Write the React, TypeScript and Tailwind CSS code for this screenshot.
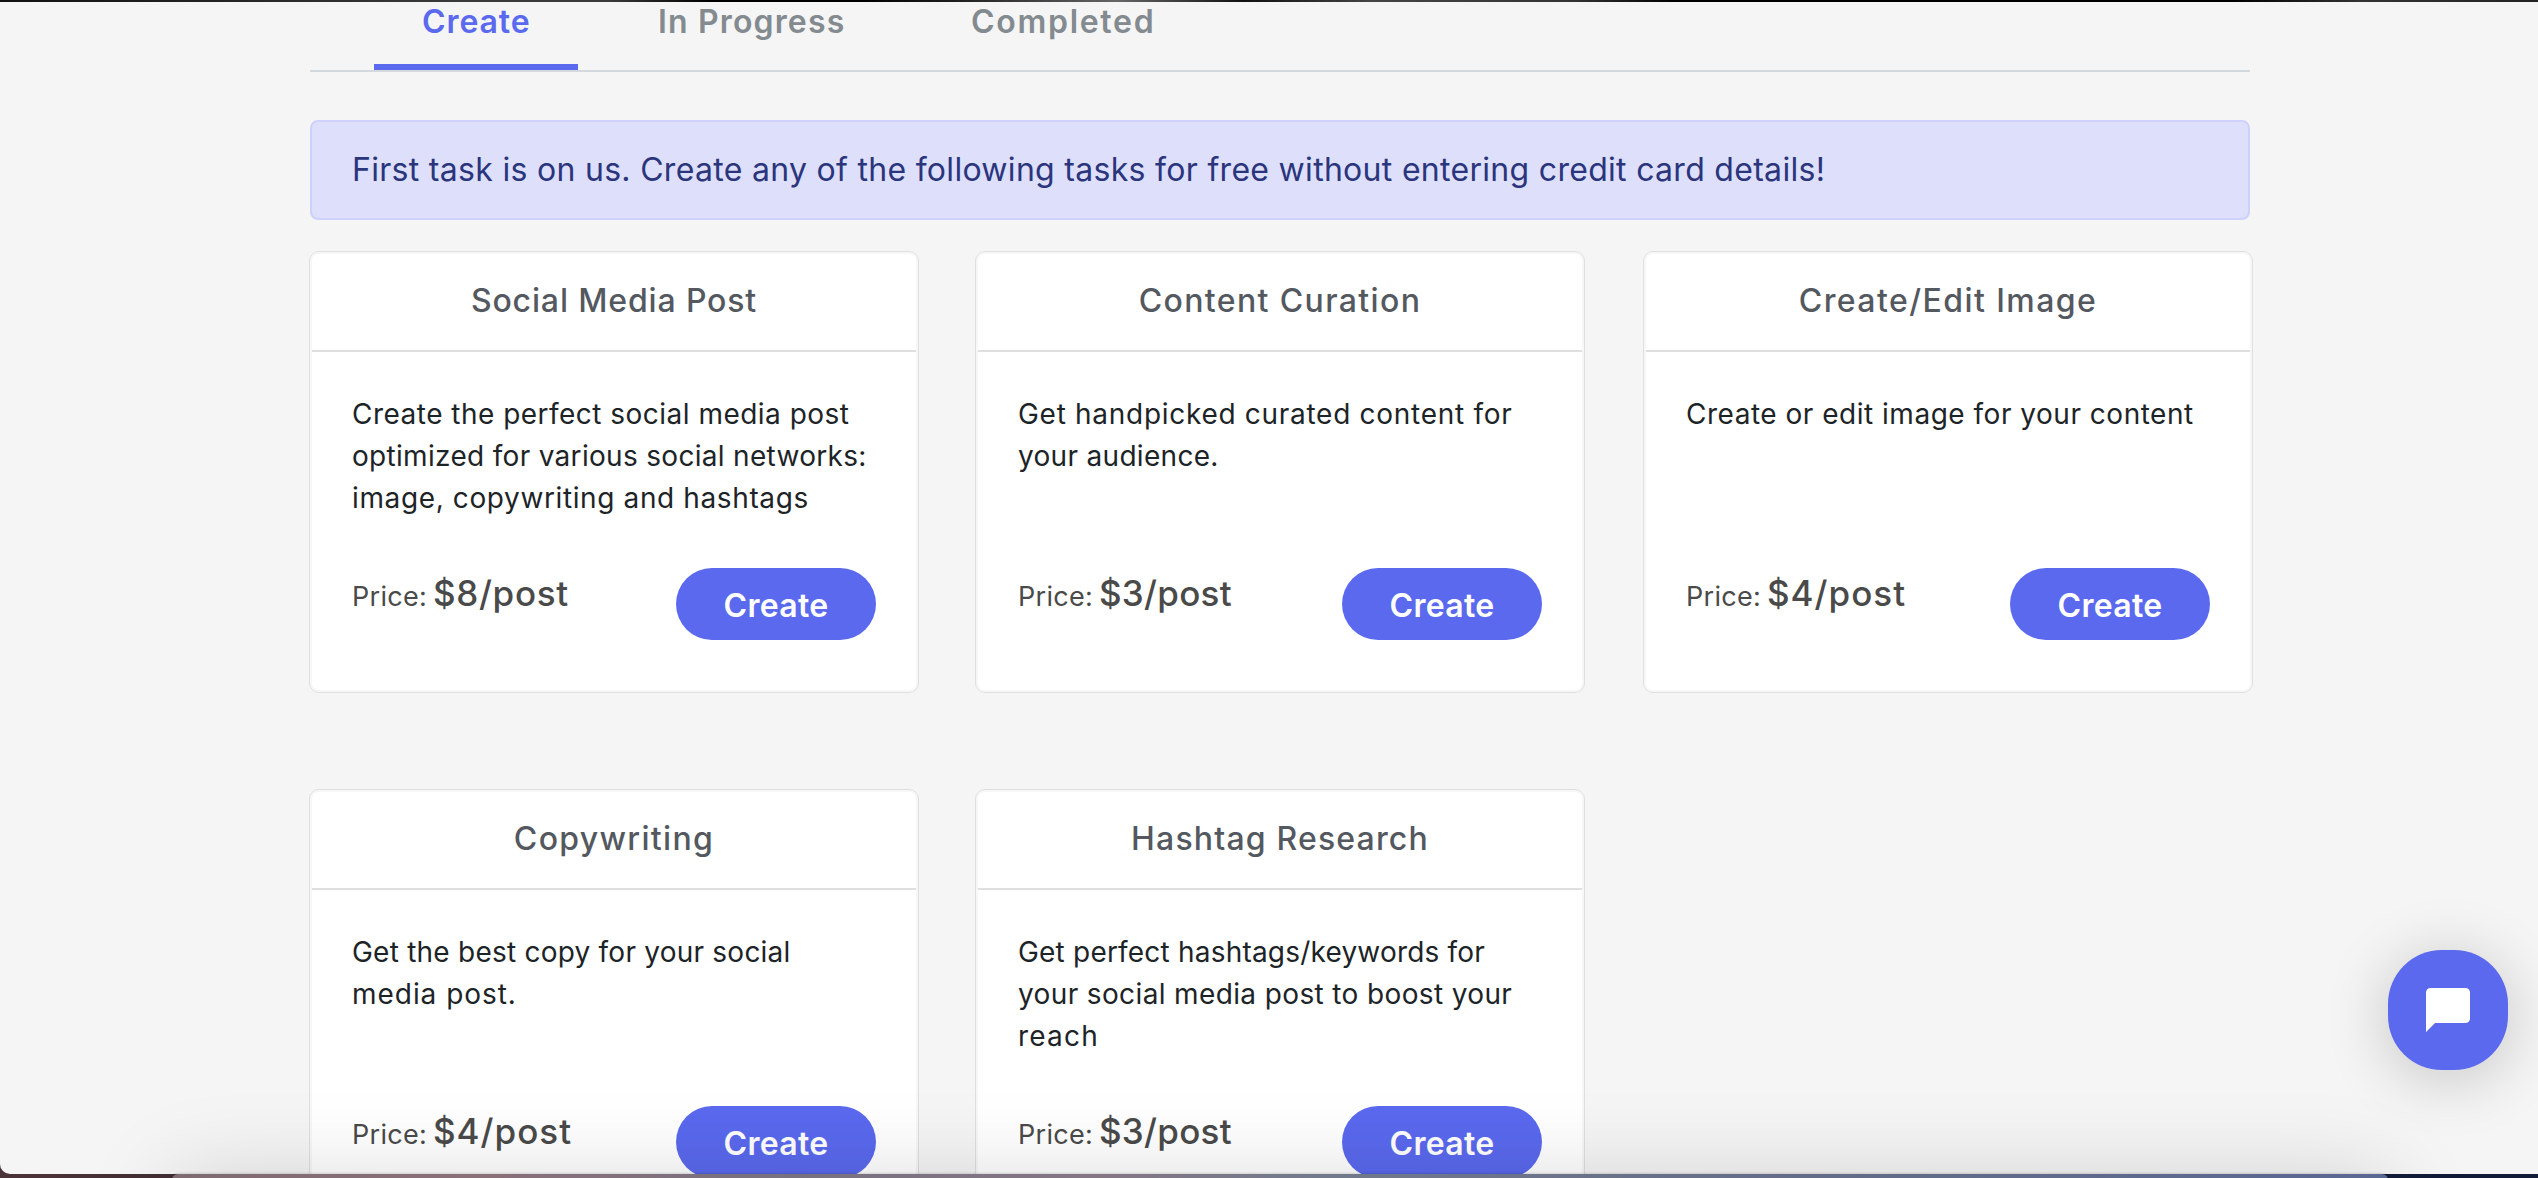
type Line = { text: string; tracking: string };
type Task = {
  title: Line;
  lines: Line[];
  price: Line;
};

const tasks: Task[] = [
  {
    title: { text: "Social Media Post", tracking: "tracking-[0.86px]" },
    lines: [
      { text: "Create the perfect social media post", tracking: "tracking-[0.48px]" },
      { text: "optimized for various social networks:", tracking: "tracking-[0.31px]" },
      { text: "image, copywriting and hashtags", tracking: "tracking-[0.62px]" },
    ],
    price: { text: "$8/post", tracking: "tracking-[0.67px]" },
  },
  {
    title: { text: "Content Curation", tracking: "tracking-[1.37px]" },
    lines: [
      { text: "Get handpicked curated content for", tracking: "tracking-[0.71px]" },
      { text: "your audience.", tracking: "tracking-[0.31px]" },
    ],
    price: { text: "$3/post", tracking: "tracking-[0.26px]" },
  },
  {
    title: { text: "Create/Edit Image", tracking: "tracking-[1.43px]" },
    lines: [{ text: "Create or edit image for your content", tracking: "tracking-[0.51px]" }],
    price: { text: "$4/post", tracking: "tracking-[1.01px]" },
  },
  {
    title: { text: "Copywriting", tracking: "tracking-[1.32px]" },
    lines: [
      { text: "Get the best copy for your social", tracking: "tracking-[0.23px]" },
      { text: "media post.", tracking: "tracking-[0.96px]" },
    ],
    price: { text: "$4/post", tracking: "tracking-[1.01px]" },
  },
  {
    title: { text: "Hashtag Research", tracking: "tracking-[1.17px]" },
    lines: [
      { text: "Get perfect hashtags/keywords for", tracking: "tracking-[0.2px]" },
      { text: "your social media post to boost your", tracking: "tracking-[0.37px]" },
      { text: "reach", tracking: "tracking-[1.22px]" },
    ],
    price: { text: "$3/post", tracking: "tracking-[0.26px]" },
  },
];

function Tabs() {
  return (
    <nav className="flex h-[70px] shrink-0 items-stretch border-b-2 border-[#d2d8db] pl-16 text-[32px] leading-[38px] font-semibold whitespace-nowrap text-[#838b90]">
      <a className="w-[204px] border-b-[6px] border-[#5a69ee] pt-px pl-12 tracking-[0.9px] text-[#5a69ee]">
        Create
      </a>
      <a className="w-[312px] pt-px pl-20 tracking-[1.15px]">In Progress</a>
      <a className="pt-px pl-[81px] tracking-[1.7px]">Completed</a>
    </nav>
  );
}

function TaskCard({ task }: { task: Task }) {
  return (
    <article className="h-[442px] w-[610px] rounded-[10px] border border-[#dfdfdf] bg-white px-0.5 shadow-[inset_0_0_0_2px_#f7f7f7] whitespace-nowrap">
      <h2
        className={`h-[100px] border-b-2 border-[#dfdfdf] text-center text-[32px] leading-[98px] font-medium text-[#54585f] ${task.title.tracking}`}
      >
        {task.title.text}
      </h2>
      <div className="px-10 pt-[41px]">
        <div className="h-[126px] text-[28px] leading-[42px] text-[#1d2427]">
          {task.lines.map((line) => (
            <p key={line.text} className={line.tracking}>
              {line.text}
            </p>
          ))}
        </div>
        <div className="mt-[49px] flex items-start justify-between text-[#4a4a4a]">
          <p className="flex items-baseline pt-1 leading-[42px]">
            <span className="w-[81px] text-[27px] tracking-[0.3px]">Price:</span>
            <span className={`text-[35px] font-medium ${task.price.tracking}`}>
              {task.price.text}
            </span>
          </p>
          <button className="h-[72px] w-[200px] rounded-full bg-[#5a69ee] text-[32px] leading-[76px] font-semibold tracking-[0.3px] text-white">
            Create
          </button>
        </div>
      </div>
    </article>
  );
}

export default function App() {
  return (
    <div className="relative flex h-[1178px] w-[2538px] flex-col overflow-hidden bg-[linear-gradient(90deg,#4c3339,#432e34_7%,#121c38_94%)] font-['Inter',sans-serif]">
      <div className="h-0.5 shrink-0 bg-[linear-gradient(90deg,#111_0%,#222_8%,#3a3a3a_18%,#3a3a3a_24%,#000_28%,#000_34%,#222_38%,#666_44%,#111_49%,#444_54%,#333_62%,#000_66%,#000_88%,#333_93%,#222_100%)]" />
      <main className="h-[1172px] shrink-0 overflow-hidden rounded-bl-[10px] bg-[#f5f5f5]">
        <div className="ml-[309px] flex w-[1944px] flex-col">
          <div className="ml-px flex w-[1940px] flex-col">
            <Tabs />
            <div className="mt-12 h-[100px] rounded-lg border-2 border-[#ced2fb] bg-[#dddffb] pl-10 text-[32px] leading-[96px] tracking-[0.3px] whitespace-nowrap text-[#2b357c]">
              First task is on us. Create any of the following tasks for free without entering credit
              card details!
            </div>
          </div>
          <div className="mt-[31px] grid grid-cols-[666px_668px_610px] gap-y-24">
            {tasks.map((task) => (
              <TaskCard key={task.title.text} task={task} />
            ))}
          </div>
        </div>
      </main>

      {/* Desktop dock peeking out under the window, casting its shadow upwards */}
      <div className="absolute top-[1174px] left-[172px] h-[200px] w-[2216px] rounded-t-md bg-[linear-gradient(90deg,#806b72,#8a7079_14%,#77717f_28%,#857684_42%,#747a8c_50%,#636c88_75%,#596793)] shadow-[0_0_3px_rgba(0,0,0,0.25),0_4px_90px_rgba(0,0,0,0.15)]" />

      <button
        aria-label="Open chat"
        className="absolute top-[950px] left-[2388px] flex size-[120px] items-center justify-center rounded-[54px] bg-[#5a69ee] shadow-[0_8px_64px_rgba(0,0,0,0.2)]"
      >
        <svg viewBox="0 0 44 44" className="size-11 fill-white">
          <path d="M4.4 0h35.2A4.4 4.4 0 0 1 44 4.4v26.2a4.4 4.4 0 0 1-4.4 4.4H9L0 44V4.4A4.4 4.4 0 0 1 4.4 0z" />
        </svg>
      </button>
    </div>
  );
}
